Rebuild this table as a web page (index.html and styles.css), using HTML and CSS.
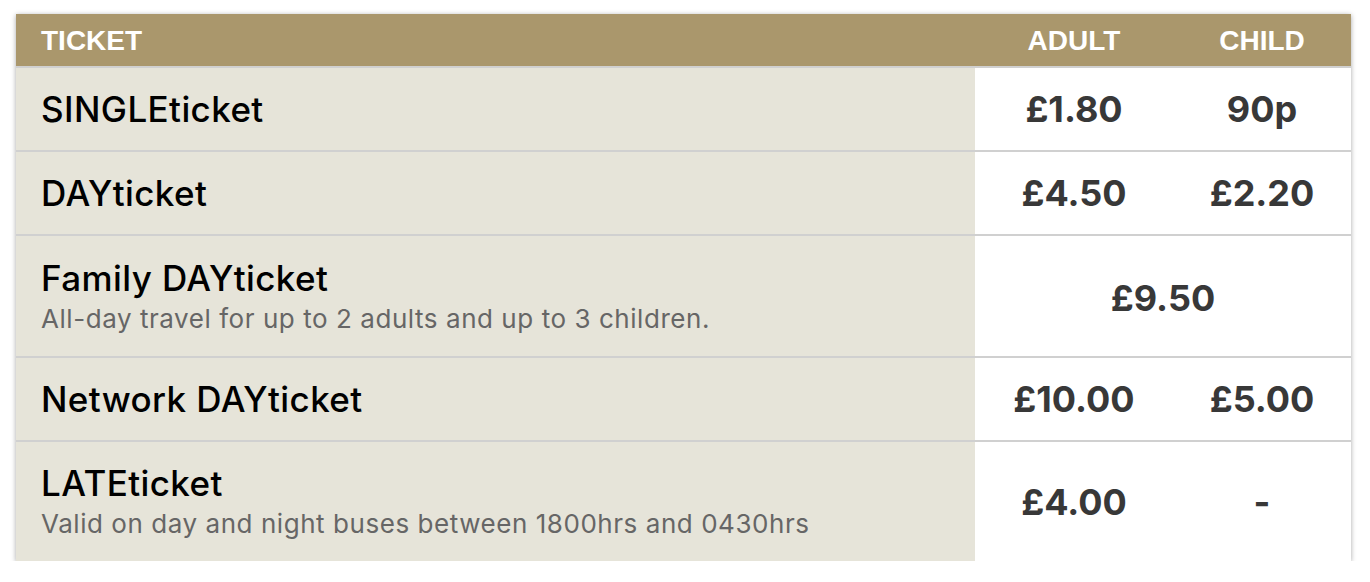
FILE: index.html
```html
<!DOCTYPE html>
<html>
<head>
<meta charset="utf-8">
<link rel="stylesheet" href="styles.css">
</head>
<body>
<div class="fares">
  <div class="row head">
    <div class="cell name">TICKET</div>
    <div class="cell price">ADULT</div>
    <div class="cell price">CHILD</div>
  </div>
  <div class="row">
    <div class="cell name"><div class="title">SINGLEticket</div></div>
    <div class="cell price">£1.80</div>
    <div class="cell price">90p</div>
  </div>
  <div class="row">
    <div class="cell name"><div class="title">DAYticket</div></div>
    <div class="cell price">£4.50</div>
    <div class="cell price">£2.20</div>
  </div>
  <div class="row tall">
    <div class="cell name">
      <div class="title">Family DAYticket</div>
      <div class="desc">All-day travel for up to 2 adults and up to 3 children.</div>
    </div>
    <div class="cell price span">£9.50</div>
  </div>
  <div class="row">
    <div class="cell name"><div class="title">Network DAYticket</div></div>
    <div class="cell price">£10.00</div>
    <div class="cell price">£5.00</div>
  </div>
  <div class="row tall last">
    <div class="cell name">
      <div class="title">LATEticket</div>
      <div class="desc">Valid on day and night buses between 1800hrs and 0430hrs</div>
    </div>
    <div class="cell price">£4.00</div>
    <div class="cell price">-</div>
  </div>
</div>
</body>
</html>
```
FILE: styles.css
```css
html, body {
  margin: 0;
  padding: 0;
  background: #ffffff;
}
body {
  padding: 14px 0 0 16px;
}
.fares {
  width: 1335px;
  background: #fff;
  box-shadow: 0 1px 5px rgba(0, 0, 0, 0.35);
}
.row {
  display: grid;
  grid-template-columns: 959px 198px 1fr;
  height: 82px;
  border-top: 2px solid #d0d0d0;
}
.row.head {
  height: 52px;
  border-top: none;
  background: #aa976c;
}
.row.tall {
  height: 120px;
}
.row.last {
  height: 119px;
}
.cell {
  display: flex;
  align-items: center;
}
.name {
  background: #e6e4d9;
  padding-left: 25px;
  flex-direction: column;
  align-items: flex-start;
  justify-content: center;
}
.tall .name {
  padding-top: 2px;
}
.head .name {
  background: transparent;
}
.head .cell {
  font-family: "Liberation Sans", Arial, sans-serif;
  font-weight: 700;
  font-size: 28px;
  color: #ffffff;
  padding-top: 1px;
}
.price {
  justify-content: center;
  font-family: Inter, sans-serif;
  font-weight: 700;
  font-size: 36px;
  color: #383838;
}
.price.span {
  grid-column: 2 / 4;
  padding-top: 3px;
}
.title {
  font-family: Inter, "Noto Sans", sans-serif;
  font-weight: 500;
  font-size: 35px;
  letter-spacing: 0.4px;
  color: #000;
  line-height: 40px;
}
.desc {
  margin-top: 3px;
  font-family: Inter, sans-serif;
  font-size: 26px;
  letter-spacing: 0.55px;
  color: #666666;
  line-height: 36px;
}
```
